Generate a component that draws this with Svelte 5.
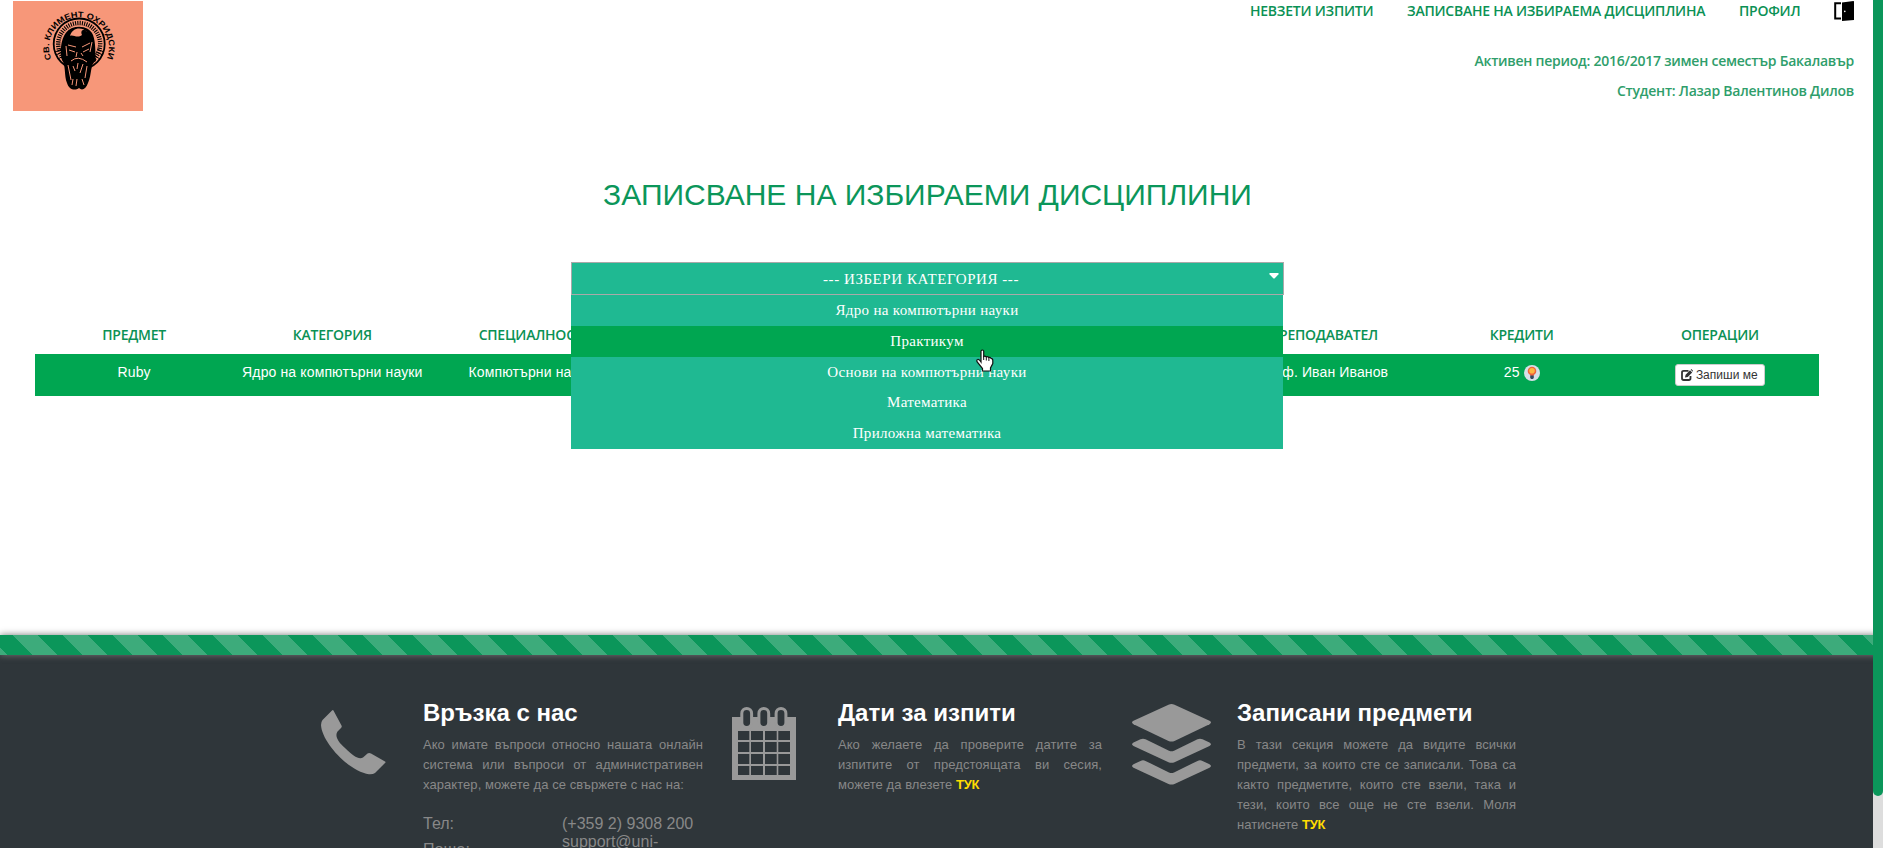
<script>
  const nav = [
    { label: 'НЕВЗЕТИ ИЗПИТИ', width: 123 },
    { label: 'ЗАПИСВАНЕ НА ИЗБИРАЕМА ДИСЦИПЛИНА', width: 298 },
    { label: 'ПРОФИЛ', width: 61 }
  ];
  const headers = ['ПРЕДМЕТ', 'КАТЕГОРИЯ', 'СПЕЦИАЛНОСТ', '', '', '', 'ПРЕПОДАВАТЕЛ', 'КРЕДИТИ', 'ОПЕРАЦИИ'];
  const cells = ['Ruby', 'Ядро на компютърни науки', 'Компютърни науки', '', '', '', 'проф. Иван Иванов'];
  const options = ['Ядро на компютърни науки', 'Практикум', 'Основи на компютърни науки', 'Математика', 'Приложна математика'];
  let active = $state(1);
  const ticks = Array.from({ length: 46 }, (_, i) => 130 + i * 6.2);
  const cellX = [[6, 11.3], [19, 12], [33, 11.7], [46.3, 11.7]];
  const cellY = [[24, 9], [35, 10], [47, 10], [59, 9]];
</script>

<div class="page">
  <header>
    <svg class="logo" width="130" height="110" viewBox="0 0 130 110">
      <rect width="130" height="110" fill="#f79779" />
      <defs><path id="arc" d="M38.3 58 A30 30 0 1 1 93.7 58" /></defs>
      <text font-family="Liberation Sans" font-size="8.2" font-weight="bold"><textPath href="#arc" textLength="117" lengthAdjust="spacingAndGlyphs">СВ. КЛИМЕНТ ОХРИДСКИ</textPath></text>
      <circle cx="66.2" cy="43" r="25.5" fill="none" stroke="#000" stroke-width="1.8" />
      {#each ticks as a}
        <line x1="85" y1="43" x2="89.4" y2="43" stroke="#000" stroke-width="1.1" transform="rotate({a} 66.2 43)" />
      {/each}
      <path d="M49 59 C46 47 49 31 59 27 C67 24 77 26 80 34 C83 42 82 52 83 60 C77 62 79 74 75 82 C73 88 69 90 66 87 C62 90 56 89 54 82 C51 75 53 64 49 59Z" fill="#000" />
      <path d="M57 35 C59 27 68 25 74 31 C70 27 67 30 69 34 C64 38 60 33 57 35Z" fill="#f79779" />
      <path d="M55 44 L63 46 M69 46 L77 42 M56 49 L62 51 M70 51 L76 48 M64 51 L63 56 M68 52 L70 55 M58 60 Q65 54 74 61 M60 65 L62 70 M65 62 L64 68 M70 63 L67 72 M55 64 L58 79 M60 78 L59 84 M64 78 L63 85 M69 78 L71 84 M74 65 L72 77 M79 41 L77 51 M53 45 L54 55" stroke="#f79779" stroke-width="1" fill="none" />
      <path d="M84 48 L91 51 M83 51 L90 54 M82 55 L87 58 M49 48 L42 51 M49 51 L43 54 M50 55 L45 58" stroke="#000" />
    </svg>
    <div class="top">
      <nav>
        {#each nav as item}
          <a href="#top" style="width:{item.width}px">{item.label}</a>
        {/each}
        <svg width="20" height="20" viewBox="0 0 20 20">
          <path d="M7 2.2 H1.2 V17.5 H7" fill="none" stroke="#000" stroke-width="2" />
          <path d="M8 1.5 L19.5 0 Q20 0 20 1 V19 L8 20Z" />
          <circle cx="10.8" cy="10.4" r=".8" fill="#fff" />
        </svg>
      </nav>
      <p>Активен период: 2016/2017 зимен семестър Бакалавър</p>
      <p class="second">Студент: Лазар Валентинов Дилов</p>
    </div>
  </header>

  <h1>ЗАПИСВАНЕ НА ИЗБИРАЕМИ ДИСЦИПЛИНИ</h1>

  <div class="select">
    <div class="current"><span>--- ИЗБЕРИ КАТЕГОРИЯ ---</span>
      <svg class="caret" width="10" height="6" viewBox="0 0 10 6"><path d="M1 0 H9 Q10 .3 9.5 1.2 L6 5 Q5 6 4 5 L.5 1.2 Q0 .3 1 0Z" fill="#fff" /></svg>
    </div>
    <ul>
      {#each options as option, i}
        <li class:active={i === active}>{option}</li>
      {/each}
    </ul>
    <svg class="cursor" width="18" height="23" viewBox="0 0 18 23">
      <path d="M5 2 Q6.3 0 7.7 2 V7.5 Q9 6.4 10.3 7.8 Q11.5 7 12.8 8.5 Q14.2 8 15 9.3 Q16.8 9.3 16.8 11.5 V14.5 L14.5 19 V22 H6.5 V19.5 L1.2 13 Q.2 11 1.7 10.5 Q3 10 5 13Z" fill="#fff" stroke="#111" stroke-width="1.2" />
      <path d="M7.7 7 V11 M10.3 8 V11.5 M12.9 9 V12" stroke="#111" fill="none" />
    </svg>
  </div>

  <div class="table">
    <div class="row head">
      {#each headers as h}<div>{h}</div>{/each}
    </div>
    <div class="row data">
      {#each cells as c}<div>{c}</div>{/each}
      <div class="credits">25
        <svg width="16" height="16" viewBox="0 0 16 16">
          <circle cx="8" cy="8" r="8" fill="#d5e0e8" />
          <circle cx="8" cy="6" r="4.3" fill="#f0643c" />
          <path d="M5.5 8 H10.5 L9.5 11 H6.5Z" fill="#f0643c" />
          <circle cx="8" cy="5.8" r="2.8" fill="#fdb740" />
          <path d="M6.2 10.5 H9.8 V13 L8.8 14 H7.2 L6.2 13Z" fill="#34495e" />
        </svg>
      </div>
      <div class="ops">
        <button>
          <svg width="12" height="12" viewBox="0 0 12 12"><path d="M7.5 1.8 H2.7 Q1 1.8 1 3.5 V9.3 Q1 11 2.7 11 H7.8 Q9.5 11 9.5 9.3 V7" fill="none" stroke="#333" stroke-width="1.8" /><path d="M4 8.6 L4.6 5.7 L9 1.3 L11.2 3.5 L6.8 7.9Z M9.7 .7 L10.4 0 L12 1.7 L11.8 2.8Z" fill="#333" /></svg>
          <span>Запиши ме</span>
        </button>
      </div>
    </div>
  </div>

  <footer>
    <div class="stripes"></div>
    <div class="columns">
      <section class="contact">
        <svg class="phone" width="65" height="65" viewBox="0 0 65 65"><path fill="#999" d="M11 .5 Q12 -.4 12.6 .8 L20.5 15.5 Q21.2 17 20 18 L16.5 21.5 C13.5 26 17 32 24 38 C32 46 38 50 42 47.5 L46.5 43.5 Q48 42.3 50 43.5 L64 51.5 Q65 52.2 64 53 L54 63 Q52 64.4 48 64.2 C29 62 1 33 0 15 Q0 12 1.5 10Z" /></svg>
        <div class="body">
          <h2>Връзка с нас</h2>
          <p>Ако имате въпроси относно нашата онлайн система или въпроси от административен характер, можете да се свържете с нас на:</p>
          <dl><dt>Тел:</dt><dd>(+359 2) 9308 200</dd></dl>
          <dl class="mail"><dt>Поща:</dt><dd>support@uni-</dd></dl>
        </div>
      </section>
      <section class="dates">
        <svg class="calendar" width="64" height="73" viewBox="0 0 64 73">
          <rect y="10" width="64" height="63" fill="#999" />
          {#each cellY as [y, h]}{#each cellX as [x, w]}<rect {x} {y} width={w} height={h} fill="#2f363a" />{/each}{/each}
          {#each [14.7, 31.8, 49] as cx}<rect x={cx - 4.9} y="1.5" width="9.8" height="19" rx="4.9" fill="#2f363a" stroke="#999" stroke-width="3" />{/each}
        </svg>
        <div class="body">
          <h2>Дати за изпити</h2>
          <p>Ако желаете да проверите датите за изпитите от предстоящата ви сесия, можете да влезете <b>ТУК</b></p>
        </div>
      </section>
      <section class="subjects">
        <svg class="layers" width="79" height="81" viewBox="0 0 79 81" fill="#999">
          <path d="M36.5 .7 Q39.5 -.5 42.5 .7 L77.5 16.8 Q80.5 18.5 77.5 20.2 L42.5 37 Q39.5 38.2 36.5 37 L1.5 20.2 Q-1.5 18.5 1.5 16.8Z" />
          <path id="chev" d="M8.5 35.2 Q11 34.1 13.5 35.2 L37 46.7 Q39.5 47.8 42 46.7 L65.5 35.2 Q68 34.1 70.5 35.2 L77.5 38.5 Q80.5 40.3 77.5 42 L42.5 58.2 Q39.5 59.3 36.5 58.2 L1.5 42 Q-1.5 40.3 1.5 38.5Z" />
          <use href="#chev" y="21.7" />
        </svg>
        <div class="body">
          <h2>Записани предмети</h2>
          <p>В тази секция можете да видите всички предмети, за които сте се записали. Това са както предметите, които сте взели, така и тези, които все още не сте взели. Моля натиснете <b>ТУК</b></p>
        </div>
      </section>
    </div>
  </footer>
  <div class="scrollbar"><i></i></div>
</div>

<style>
  :global(body) { overflow: hidden; }
  .page { position: relative; width: 1883px; height: 848px; overflow: hidden; background: #fff; font-family: "Liberation Sans", Arial, sans-serif; display: flex; flex-direction: column; }
  header { display: flex; justify-content: space-between; padding: 1px 29px 0 13px; height: 111px; flex: none; box-sizing: content-box; }
  .top { font: 600 14px/20px "Open Sans", sans-serif; color: #0b9155; text-align: right; letter-spacing: -.24px; }
  nav { display: flex; gap: 34px; justify-content: flex-end; }
  nav a { color: inherit; text-decoration: none; white-space: nowrap; text-align: left; }
  nav svg { display: block; }
  .top p { margin: 30px 0 0; color: #2f9e6b; }
  .top p.second { margin-top: 10px; }
  h1 { margin: 65px 28px 0 0; text-align: center; font-size: 30px; line-height: 36px; font-weight: 400; color: #0b965a; flex: none; }
  .select { position: relative; z-index: 2; width: 713px; margin: 49px 0 0 571px; color: #fff; font: 15px/30.8px "Liberation Serif", serif; letter-spacing: .32px; text-align: center; flex: none; }
  .current { display: flex; justify-content: center; height: 33px; box-sizing: border-box; border: 1px solid #a9a9a9; background: #1fb992; line-height: 32px; letter-spacing: .55px; padding-right: 13px; position: relative; }
  .caret { position: absolute; right: 4px; top: 10px; }
  ul { position: absolute; left: 0; top: 33px; width: 712px; margin: 0; padding: 0; list-style: none; background: #1fb992; }
  li { height: 30.8px; }
  li.active { background: #00a651; }
  .cursor { position: absolute; left: 405px; top: 87px; }
  .table { margin: 30px 0 0 35px; width: 1784px; flex: none; }
  .row { display: grid; grid-template-columns: repeat(9, 1fr); text-align: center; font-size: 14px; line-height: 20px; white-space: nowrap; }
  .head { font-family: "Open Sans", sans-serif; font-weight: 600; letter-spacing: -.24px; color: #0b9155; height: 29px; }
  .data { background: #00a651; color: #fff; height: 42px; padding-top: 8px; box-sizing: border-box; letter-spacing: .13px; }
  .credits { display: flex; justify-content: center; gap: 4px; }
  .credits svg { margin-top: 3px; }
  .ops { display: flex; justify-content: center; padding-top: 2px; }
  button { display: flex; align-items: center; gap: 3px; height: 22px; width: 90px; padding: 0 5px; border: 1px solid #ccc; border-radius: 3px; background: #fff; color: #333; font: 12px "Liberation Sans", sans-serif; white-space: nowrap; }
  footer { margin-top: auto; height: 213px; flex: none; background: #2f363a; }
  .stripes { height: 20px; background: linear-gradient(45deg, #3dab7b 25%, #0b965a 25%, #0b965a 50%, #3dab7b 50%, #3dab7b 75%, #0b965a 75%) 13px 0 / 50px 50px; box-shadow: 0 0 7px #777; }
  .columns { display: flex; padding-left: 321px; height: 193px; overflow: hidden; }
  section { display: flex; align-items: flex-start; flex: none; }
  .contact { width: 411px; }
  .dates { width: 400px; }
  .phone { margin: 55px 37px 0 0; }
  .calendar { margin: 52px 42px 0 0; }
  .layers { margin: 49px 26px 0 0; }
  .body { color: #888; padding-top: 42px; }
  .contact .body { width: 280px; }
  .dates .body { width: 264px; }
  .subjects .body { width: 279px; }
  h2 { margin: 0; color: #fff; font-size: 24px; line-height: 32px; height: 38px; white-space: nowrap; }
  p { margin: 0; }
  .body p { font-size: 13px; line-height: 20px; letter-spacing: .06px; text-align: justify; }
  b { color: #ffdc00; letter-spacing: -.3px; }
  dl { display: grid; grid-template-columns: 139px 1fr; margin: 19px 0 0; font-size: 16px; line-height: 20px; }
  dl.mail { margin: -2px 0 0; }
  dt { margin: 0; }
  .mail dt { padding-top: 8px; }
  dd { margin: 0; white-space: nowrap; }
  .scrollbar { position: absolute; right: 0; top: 0; width: 10px; height: 848px; background: #ddd; z-index: 3; }
  .scrollbar i { display: block; height: 796px; background: #0b965a; border-radius: 0 0 5px 5px; }
</style>
